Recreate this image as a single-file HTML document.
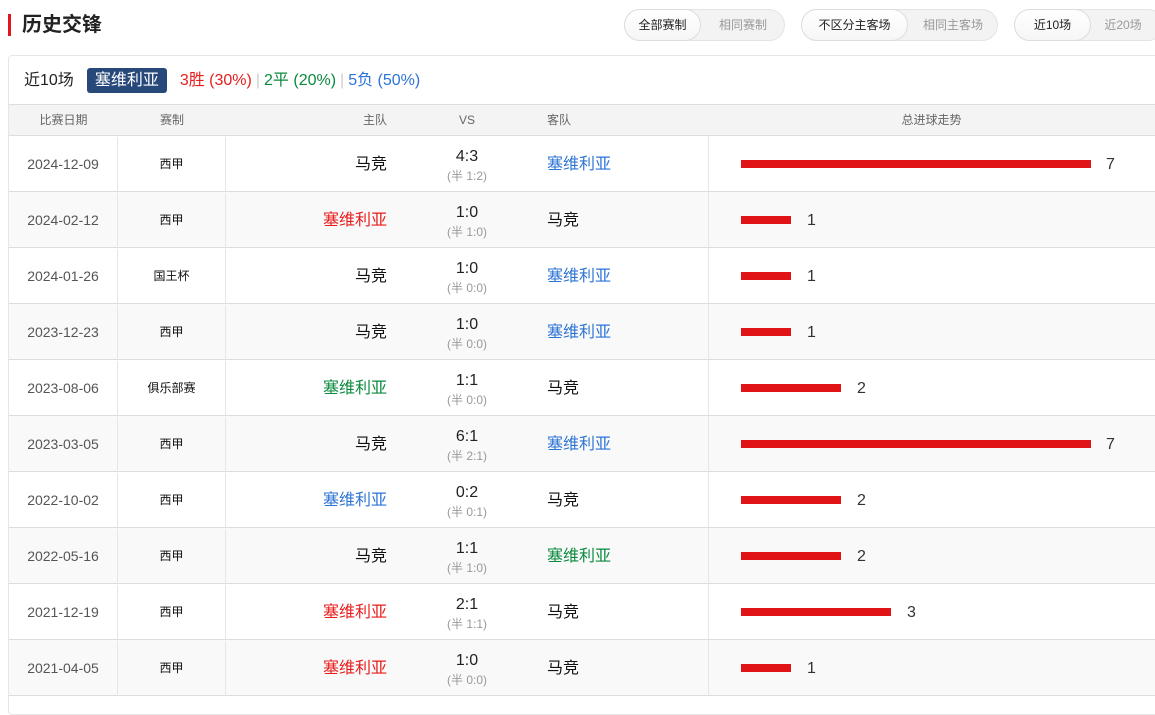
<!DOCTYPE html>
<html><head><meta charset="utf-8"><style>
*{margin:0;padding:0;box-sizing:border-box}
body{width:1155px;height:700px;background:#fff;font-family:"Liberation Sans","Noto Sans CJK SC",sans-serif;position:relative;overflow:hidden;color:#333}
.a{position:absolute}
.title{left:8px;top:14px;height:22px;border-left:3px solid #e0161a;padding-left:11px;font-size:20px;font-weight:bold;color:#222;line-height:22px}
.grp{top:9px;height:32px;border:1px solid #e4e4e4;border-radius:16px;background:#f3f3f3;font-size:12px;white-space:nowrap}
.grp span{position:absolute;top:-1px;height:32px;line-height:32px;text-align:center;color:#999;border-radius:16px}
.grp span.on{background:linear-gradient(#fff,#f6f6f6);color:#222;border:1px solid #ddd;line-height:30px;left:-1px}
.card{left:8px;top:55px;width:1160px;height:660px;border:1px solid #e6e6e6;border-radius:4px}
.sum{left:24px;top:68px;font-size:16px;line-height:24px;display:flex;align-items:center;white-space:nowrap}
.tag{background:#27497a;color:#fff;border-radius:3px;padding:0 8px;margin:0 13px;height:25px;line-height:25px}
.sep{color:#ccc;margin:0 4px}
.hd{left:9px;top:104px;width:1146px;height:32px;background:#f4f4f4;border-top:1px solid #ddd;border-bottom:1px solid #ddd;font-size:12px;color:#666}
.hd div{position:absolute;top:0;line-height:30px}
.row{left:9px;width:1146px;height:56px;border-bottom:1px solid #ddd}
.row.g{background:#f9f9f9}
.row div{position:absolute}
.d{left:0;width:109px;text-align:center;top:1px;line-height:55px;font-size:14px;color:#555;border-right:1px solid #e6e6e6;height:55px}
.t{left:109px;width:108px;text-align:center;line-height:55px;font-size:12px;color:#111;border-right:1px solid #e6e6e6;height:55px;top:1px}
.h{left:217px;width:161px;text-align:right;line-height:55px;font-size:16px;color:#111;top:1px}
.s{left:400px;width:116px;text-align:center;top:11px;font-size:16px;line-height:20px;color:#222}
.s small{display:block;font-size:12px;color:#999;line-height:18px}
.w{left:538px;line-height:55px;font-size:16px;color:#111;top:1px}
.c{left:699px;top:0;height:55px;border-left:1px solid #e6e6e6}
.bar{left:732px;top:24px;height:8px;background:#e01416}
.n{top:1px;line-height:55px;font-size:16px;color:#333}
.r{color:#e81c1c}.gr{color:#0a8a3e}.b{color:#2b74d6}
</style></head><body>
<div class="a title">历史交锋</div>
<div class="a grp" style="left:624px;width:161px"><span class="on" style="width:77px">全部赛制</span><span style="left:76px;width:84px">相同赛制</span></div>
<div class="a grp" style="left:801px;width:197px"><span class="on" style="width:107px">不区分主客场</span><span style="left:106px;width:90px">相同主客场</span></div>
<div class="a grp" style="left:1014px;width:150px"><span class="on" style="width:77px">近10场</span><span style="left:76px;width:64px">近20场</span></div>
<div class="a card"></div>
<div class="a sum"><span style="color:#222">近10场</span><span class="tag">塞维利亚</span><span class="r">3胜 (30%)</span><span class="sep">|</span><span class="gr">2平 (20%)</span><span class="sep">|</span><span class="b">5负 (50%)</span></div>
<div class="a hd"><div style="left:0;width:109px;text-align:center">比赛日期</div><div style="left:109px;width:108px;text-align:center">赛制</div><div style="left:217px;width:161px;text-align:right">主队</div><div style="left:400px;width:116px;text-align:center">VS</div><div style="left:538px">客队</div><div style="left:699px;width:447px;text-align:center">总进球走势</div></div>

<div class="a row" style="top:136px"><div class="d">2024-12-09</div><div class="t">西甲</div><div class="h">马竞</div><div class="s">4:3<small>(半 1:2)</small></div><div class="w b">塞维利亚</div><div class="c"></div><div class="bar" style="width:350px"></div><div class="n" style="left:1097px">7</div></div>
<div class="a row g" style="top:192px"><div class="d">2024-02-12</div><div class="t">西甲</div><div class="h r">塞维利亚</div><div class="s">1:0<small>(半 1:0)</small></div><div class="w">马竞</div><div class="c"></div><div class="bar" style="width:50px"></div><div class="n" style="left:798px">1</div></div>
<div class="a row" style="top:248px"><div class="d">2024-01-26</div><div class="t">国王杯</div><div class="h">马竞</div><div class="s">1:0<small>(半 0:0)</small></div><div class="w b">塞维利亚</div><div class="c"></div><div class="bar" style="width:50px"></div><div class="n" style="left:798px">1</div></div>
<div class="a row g" style="top:304px"><div class="d">2023-12-23</div><div class="t">西甲</div><div class="h">马竞</div><div class="s">1:0<small>(半 0:0)</small></div><div class="w b">塞维利亚</div><div class="c"></div><div class="bar" style="width:50px"></div><div class="n" style="left:798px">1</div></div>
<div class="a row" style="top:360px"><div class="d">2023-08-06</div><div class="t">俱乐部赛</div><div class="h gr">塞维利亚</div><div class="s">1:1<small>(半 0:0)</small></div><div class="w">马竞</div><div class="c"></div><div class="bar" style="width:100px"></div><div class="n" style="left:848px">2</div></div>
<div class="a row g" style="top:416px"><div class="d">2023-03-05</div><div class="t">西甲</div><div class="h">马竞</div><div class="s">6:1<small>(半 2:1)</small></div><div class="w b">塞维利亚</div><div class="c"></div><div class="bar" style="width:350px"></div><div class="n" style="left:1097px">7</div></div>
<div class="a row" style="top:472px"><div class="d">2022-10-02</div><div class="t">西甲</div><div class="h b">塞维利亚</div><div class="s">0:2<small>(半 0:1)</small></div><div class="w">马竞</div><div class="c"></div><div class="bar" style="width:100px"></div><div class="n" style="left:848px">2</div></div>
<div class="a row g" style="top:528px"><div class="d">2022-05-16</div><div class="t">西甲</div><div class="h">马竞</div><div class="s">1:1<small>(半 1:0)</small></div><div class="w gr">塞维利亚</div><div class="c"></div><div class="bar" style="width:100px"></div><div class="n" style="left:848px">2</div></div>
<div class="a row" style="top:584px"><div class="d">2021-12-19</div><div class="t">西甲</div><div class="h r">塞维利亚</div><div class="s">2:1<small>(半 1:1)</small></div><div class="w">马竞</div><div class="c"></div><div class="bar" style="width:150px"></div><div class="n" style="left:898px">3</div></div>
<div class="a row g" style="top:640px"><div class="d">2021-04-05</div><div class="t">西甲</div><div class="h r">塞维利亚</div><div class="s">1:0<small>(半 0:0)</small></div><div class="w">马竞</div><div class="c"></div><div class="bar" style="width:50px"></div><div class="n" style="left:798px">1</div></div>
</body></html>
